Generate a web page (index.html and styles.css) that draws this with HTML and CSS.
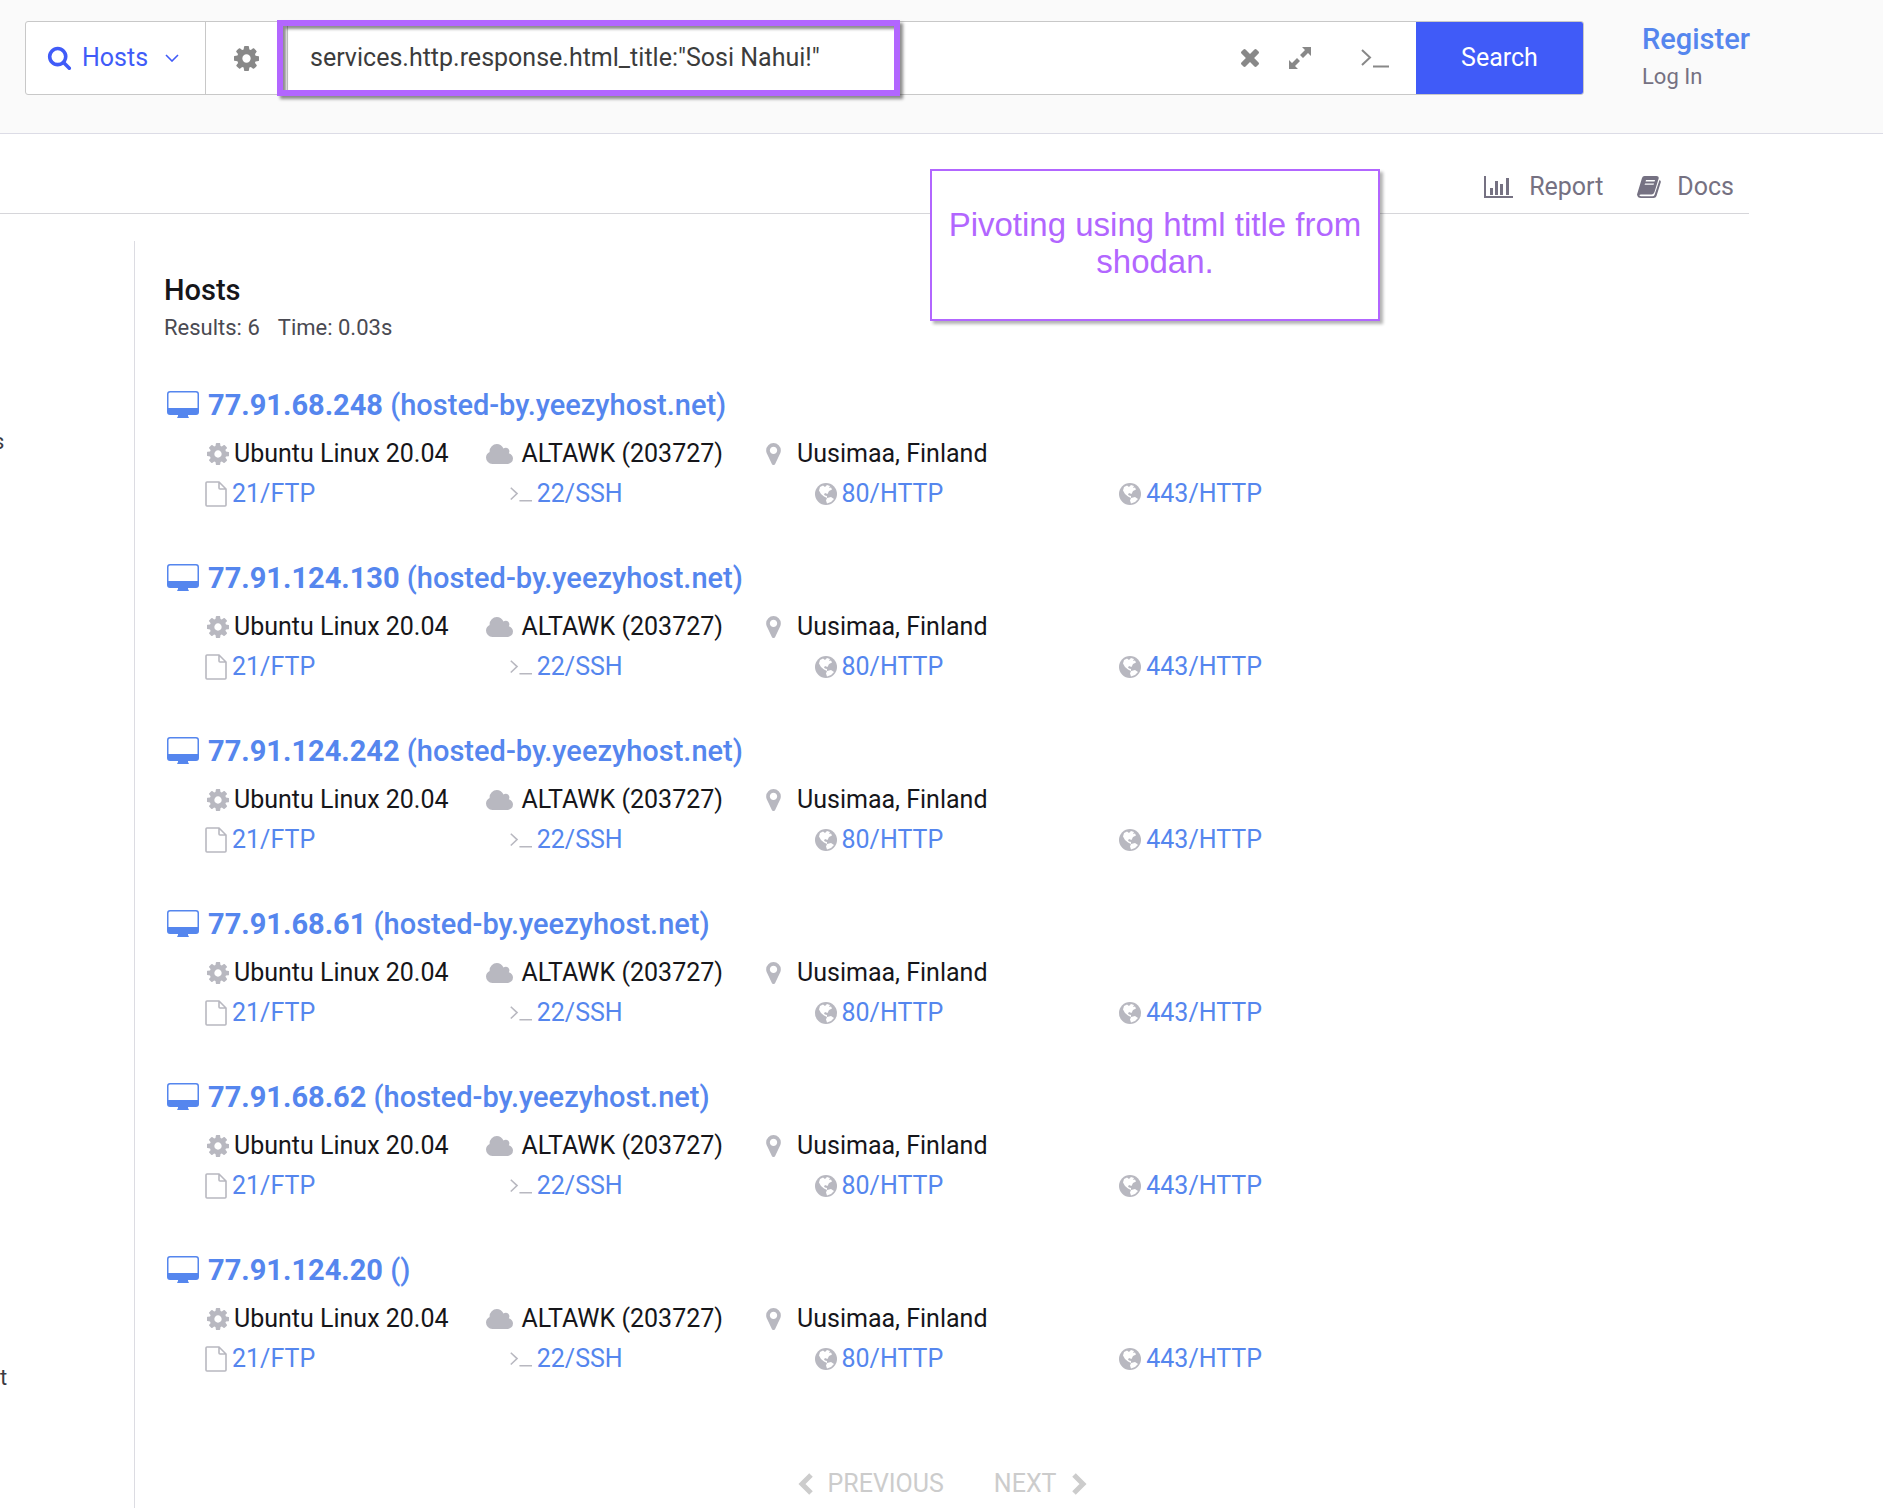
FILE: index.html
```html
<!doctype html>
<html lang="en">
    <head>
        <meta charset="UTF-8" />
        <meta name="viewport" content="width=device-width, initial-scale=1.0" />
        <title>Hosts search</title>
        <link rel="stylesheet" href="styles.css">
    </head>
    <body>
        <!-- Shared icons -->
        <svg class="sprite" aria-hidden="true">
            <symbol id="i-search" viewBox="0 0 1792 1792"><path d="M1216 832q0-185-131.500-316.500t-316.500-131.500-316.500 131.500-131.500 316.500 131.500 316.500 316.500 131.500 316.500-131.500 131.500-316.500zm512 832q0 52-38 90t-90 38q-54 0-90-38l-343-342q-179 124-399 124-143 0-273.500-55.500t-225-150-150-225-55.500-273.500 55.500-273.500 150-225 225-150 273.500-55.500 273.500 55.500 225 150 150 225 55.500 273.500q0 220-124 399l343 343q37 37 37 90z" /></symbol>
            <symbol id="i-cog" viewBox="128 128 1536 1536"><path d="M1152 896q0-106-75-181t-181-75-181 75-75 181 75 181 181 75 181-75 75-181zm512-109v222q0 12-8 23t-20 13l-185 28q-19 54-39 91 35 50 107 138 10 12 10 25t-9 23q-27 37-99 108t-94 71q-12 0-26-9l-138-108q-44 23-91 38-16 136-29 186-7 28-36 28h-222q-14 0-24.500-8.500t-11.500-21.500l-28-184q-49-16-90-37l-141 107q-10 9-25 9-14 0-25-11-126-114-165-168-7-10-7-23 0-12 8-23 15-21 51-66.500t54-70.500q-27-50-41-99l-183-27q-13-2-21-12.500t-8-23.500v-222q0-12 8-23t19-13l186-28q14-46 39-92-40-57-107-138-10-12-10-24 0-10 9-23 26-36 98.500-107.500t94.500-71.500q13 0 26 10l138 107q44-23 91-38 16-136 29-186 7-28 36-28h222q14 0 24.500 8.500t11.500 21.500l28 184q49 16 90 37l142-107q9-9 24-9 13 0 25 10 129 119 165 170 7 8 7 22 0 12-8 23-15 21-51 66.500t-54 70.500q26 50 41 98l183 28q13 2 21 12.500t8 23.500z" /></symbol>
            <symbol id="i-times" viewBox="302 366 1188 1188"><path d="M1490 1322q0 40-28 68l-136 136q-28 28-68 28t-68-28l-294-294-294 294q-28 28-68 28t-68-28l-136-136q-28-28-28-68t28-68l294-294-294-294q-28-28-28-68t28-68l136-136q28-28 68-28t68 28l294 294 294-294q28-28 68-28t68 28l136 136q28 28 28 68t-28 68l-294 294 294 294q28 28 28 68z" /></symbol>
            <symbol id="i-expand" viewBox="0 0 24 24"><path d="M14 1h9v9l-3-3-5 5-3-3 5-5zM10 23H1v-9l3 3 5-5 3 3-5 5z" /></symbol>
            <symbol id="i-terminal" viewBox="0 0 28 20"><path d="M1 2l8 7.500L1 17M12 18.500h16" fill="none" stroke="currentColor" stroke-width="2" /></symbol>
            <symbol id="i-cloud" viewBox="0 128 1920 1408"><path d="M1920 1152q0 159-112.500 271.500t-271.500 112.500h-1088q-185 0-316.500-131.500t-131.500-316.500q0-132 71-241.500t187-163.500q-2-28-2-43 0-212 150-362t362-150q158 0 286.500 88t187.500 230q70-62 166-62 106 0 181 75t75 181q0 75-41 138 129 30 213 134.500t84 239.500z" /></symbol>
            <symbol id="i-marker" viewBox="384 128 1024 1536"><path d="M1152 640q0-106-75-181t-181-75-181 75-75 181 75 181 181 75 181-75 75-181zm256 0q0 109-33 179l-364 774q-16 33-47.500 52t-67.500 19-67.500-19-46.500-52l-365-774q-33-70-33-179 0-212 150-362t362-150 362 150 150 362z" /></symbol>
            <symbol id="i-file" viewBox="0 0 22 26"><path d="M14 1H2q-1 0-1 1v22q0 1 1 1h18q1 0 1-1V8zM14 1v6q0 1 1 1h6" fill="none" stroke="currentColor" stroke-width="1.600" /></symbol>
            <symbol id="i-globe" viewBox="0 0 22 22"><circle cx="11" cy="11" r="11" /><path d="M5 4l3-1.500 2 1.500 2-2 3 1-1 2 2-.5 1 2-3 1.500-1.500 3-2.500-1-1 1.500 1 1 2 .5 0 2-3-1.500-3-2.500L4 7.500zM12 15l4-1 3 2-3 3-4 1.500-1-3z" fill="#fff" /></symbol>
            <symbol id="i-desktop" viewBox="0 0 32 27"><path d="M3 0h26q3 0 3 3v18q0 3-3 3h-8v1l1 2H10l1-2v-1H3q-3 0-3-3V3q0-3 3-3zM3 1.500Q1.500 1.500 1.500 3v14h29V3q0-1.500-1.500-1.500z" fill-rule="evenodd" /></symbol>
            <symbol id="i-chart" viewBox="0 0 29 22"><path d="M0 0h2v20h27v2H0zM6 12h3v7H6zM11 5h3v14h-3zM16 8h3v11h-3zM22 2h3v17h-3z" /></symbol>
            <symbol id="i-book" viewBox="0 0 24 22"><path d="M7.500 0h12q3 0 2 3l-4 13q-1 2.500-3 2.500H4q-2 0-1.500 1t2 .8h11q1.500 0 2-1.300L22.500 4q1.800.6 1.200 2.500L19.500 20q-.7 2-3 2H4q-3.500 0-4-3.500L5 2q.6-2 2.500-2zM9 4l-.4 1.400h9L18 4zM8 7.400l-.4 1.400h9L17 7.400z" fill-rule="evenodd" /></symbol>
            <symbol id="i-down" viewBox="0 0 14 8"><path d="M1 1l6 6 6-6" fill="none" stroke="currentColor" stroke-width="1.600" /></symbol>
            <symbol id="i-left" viewBox="0 0 15 22"><path d="M13 2l-9 9 9 9" fill="none" stroke="currentColor" stroke-width="5" /></symbol>
            <symbol id="i-right" viewBox="0 0 15 22"><path d="M2 2l9 9-9 9" fill="none" stroke="currentColor" stroke-width="5" /></symbol>
        </svg>

        <header class="header">
            <form class="search-bar">
                <label class="resource">
                    <svg class="icon resource-icon" width="25" height="25"><use href="#i-search" /></svg>
                    <select aria-label="Resource">
                        <option>Hosts</option>
                    </select>
                    <svg class="icon resource-arrow" width="14" height="8"><use href="#i-down" /></svg>
                </label>
                <button type="button" class="tool settings" aria-label="Settings">
                    <svg class="icon" width="25" height="25"><use href="#i-cog" /></svg>
                </button>
                <input type="text" class="query" aria-label="Query" value='services.http.response.html_title:"Sosi Nahui!"' />
                <div class="query-tools">
                    <button type="button" class="tool" aria-label="Clear">
                        <svg class="icon" width="18" height="18"><use href="#i-times" /></svg>
                    </button>
                    <button type="button" class="tool" aria-label="Expand">
                        <svg class="icon" width="24" height="24"><use href="#i-expand" /></svg>
                    </button>
                    <button type="button" class="tool console" aria-label="Console">
                        <svg class="icon" width="28" height="20"><use href="#i-terminal" /></svg>
                    </button>
                </div>
                <button type="submit" class="search-btn">Search</button>
                <div class="highlight"></div>
            </form>
            <nav class="account">
                <a href="#" class="register">Register</a>
                <a href="#" class="login">Log In</a>
            </nav>
        </header>

        <div class="toolbar">
            <a href="#"><svg class="icon" width="29" height="22"><use href="#i-chart" /></svg>Report</a>
            <a href="#"><svg class="icon" width="24" height="22"><use href="#i-book" /></svg>Docs</a>
            <div class="note">Pivoting using html title from shodan.</div>
        </div>

        <div class="content">
            <aside class="sidebar">
                <div class="filter cut">s</div>
                <div class="filter">t</div>
            </aside>

            <main class="results">
                <h1>Hosts</h1>
                <p class="summary"><span>Results: 6</span><span>Time: 0.03s</span></p>

                <div class="host">
                    <h2><a href="#"><svg class="icon" width="32" height="27"><use href="#i-desktop" /></svg><span><strong>77.91.68.248</strong> (hosted-by.yeezyhost.net)</span></a></h2>
                    <div class="meta">
                        <span class="os"><svg class="icon" width="22" height="22"><use href="#i-cog" /></svg>Ubuntu Linux 20.04</span>
                        <span class="network"><svg class="icon" width="27" height="20"><use href="#i-cloud" /></svg>ALTAWK (203727)</span>
                        <span class="place"><svg class="icon" width="15" height="22"><use href="#i-marker" /></svg>Uusimaa, Finland</span>
                    </div>
                    <div class="services">
                        <a href="#"><svg class="icon" width="22" height="26"><use href="#i-file" /></svg>21/FTP</a>
                        <a href="#"><svg class="icon" width="22" height="16"><use href="#i-terminal" /></svg>22/SSH</a>
                        <a href="#"><svg class="icon" width="22" height="22"><use href="#i-globe" /></svg>80/HTTP</a>
                        <a href="#"><svg class="icon" width="22" height="22"><use href="#i-globe" /></svg>443/HTTP</a>
                    </div>
                </div>

                <div class="host">
                    <h2><a href="#"><svg class="icon" width="32" height="27"><use href="#i-desktop" /></svg><span><strong>77.91.124.130</strong> (hosted-by.yeezyhost.net)</span></a></h2>
                    <div class="meta">
                        <span class="os"><svg class="icon" width="22" height="22"><use href="#i-cog" /></svg>Ubuntu Linux 20.04</span>
                        <span class="network"><svg class="icon" width="27" height="20"><use href="#i-cloud" /></svg>ALTAWK (203727)</span>
                        <span class="place"><svg class="icon" width="15" height="22"><use href="#i-marker" /></svg>Uusimaa, Finland</span>
                    </div>
                    <div class="services">
                        <a href="#"><svg class="icon" width="22" height="26"><use href="#i-file" /></svg>21/FTP</a>
                        <a href="#"><svg class="icon" width="22" height="16"><use href="#i-terminal" /></svg>22/SSH</a>
                        <a href="#"><svg class="icon" width="22" height="22"><use href="#i-globe" /></svg>80/HTTP</a>
                        <a href="#"><svg class="icon" width="22" height="22"><use href="#i-globe" /></svg>443/HTTP</a>
                    </div>
                </div>

                <div class="host">
                    <h2><a href="#"><svg class="icon" width="32" height="27"><use href="#i-desktop" /></svg><span><strong>77.91.124.242</strong> (hosted-by.yeezyhost.net)</span></a></h2>
                    <div class="meta">
                        <span class="os"><svg class="icon" width="22" height="22"><use href="#i-cog" /></svg>Ubuntu Linux 20.04</span>
                        <span class="network"><svg class="icon" width="27" height="20"><use href="#i-cloud" /></svg>ALTAWK (203727)</span>
                        <span class="place"><svg class="icon" width="15" height="22"><use href="#i-marker" /></svg>Uusimaa, Finland</span>
                    </div>
                    <div class="services">
                        <a href="#"><svg class="icon" width="22" height="26"><use href="#i-file" /></svg>21/FTP</a>
                        <a href="#"><svg class="icon" width="22" height="16"><use href="#i-terminal" /></svg>22/SSH</a>
                        <a href="#"><svg class="icon" width="22" height="22"><use href="#i-globe" /></svg>80/HTTP</a>
                        <a href="#"><svg class="icon" width="22" height="22"><use href="#i-globe" /></svg>443/HTTP</a>
                    </div>
                </div>

                <div class="host">
                    <h2><a href="#"><svg class="icon" width="32" height="27"><use href="#i-desktop" /></svg><span><strong>77.91.68.61</strong> (hosted-by.yeezyhost.net)</span></a></h2>
                    <div class="meta">
                        <span class="os"><svg class="icon" width="22" height="22"><use href="#i-cog" /></svg>Ubuntu Linux 20.04</span>
                        <span class="network"><svg class="icon" width="27" height="20"><use href="#i-cloud" /></svg>ALTAWK (203727)</span>
                        <span class="place"><svg class="icon" width="15" height="22"><use href="#i-marker" /></svg>Uusimaa, Finland</span>
                    </div>
                    <div class="services">
                        <a href="#"><svg class="icon" width="22" height="26"><use href="#i-file" /></svg>21/FTP</a>
                        <a href="#"><svg class="icon" width="22" height="16"><use href="#i-terminal" /></svg>22/SSH</a>
                        <a href="#"><svg class="icon" width="22" height="22"><use href="#i-globe" /></svg>80/HTTP</a>
                        <a href="#"><svg class="icon" width="22" height="22"><use href="#i-globe" /></svg>443/HTTP</a>
                    </div>
                </div>

                <div class="host">
                    <h2><a href="#"><svg class="icon" width="32" height="27"><use href="#i-desktop" /></svg><span><strong>77.91.68.62</strong> (hosted-by.yeezyhost.net)</span></a></h2>
                    <div class="meta">
                        <span class="os"><svg class="icon" width="22" height="22"><use href="#i-cog" /></svg>Ubuntu Linux 20.04</span>
                        <span class="network"><svg class="icon" width="27" height="20"><use href="#i-cloud" /></svg>ALTAWK (203727)</span>
                        <span class="place"><svg class="icon" width="15" height="22"><use href="#i-marker" /></svg>Uusimaa, Finland</span>
                    </div>
                    <div class="services">
                        <a href="#"><svg class="icon" width="22" height="26"><use href="#i-file" /></svg>21/FTP</a>
                        <a href="#"><svg class="icon" width="22" height="16"><use href="#i-terminal" /></svg>22/SSH</a>
                        <a href="#"><svg class="icon" width="22" height="22"><use href="#i-globe" /></svg>80/HTTP</a>
                        <a href="#"><svg class="icon" width="22" height="22"><use href="#i-globe" /></svg>443/HTTP</a>
                    </div>
                </div>

                <div class="host">
                    <h2><a href="#"><svg class="icon" width="32" height="27"><use href="#i-desktop" /></svg><span><strong>77.91.124.20</strong> ()</span></a></h2>
                    <div class="meta">
                        <span class="os"><svg class="icon" width="22" height="22"><use href="#i-cog" /></svg>Ubuntu Linux 20.04</span>
                        <span class="network"><svg class="icon" width="27" height="20"><use href="#i-cloud" /></svg>ALTAWK (203727)</span>
                        <span class="place"><svg class="icon" width="15" height="22"><use href="#i-marker" /></svg>Uusimaa, Finland</span>
                    </div>
                    <div class="services">
                        <a href="#"><svg class="icon" width="22" height="26"><use href="#i-file" /></svg>21/FTP</a>
                        <a href="#"><svg class="icon" width="22" height="16"><use href="#i-terminal" /></svg>22/SSH</a>
                        <a href="#"><svg class="icon" width="22" height="22"><use href="#i-globe" /></svg>80/HTTP</a>
                        <a href="#"><svg class="icon" width="22" height="22"><use href="#i-globe" /></svg>443/HTTP</a>
                    </div>
                </div>

                <div class="pager">
                    <button type="button" disabled><svg class="icon" width="15" height="22"><use href="#i-left" /></svg>PREVIOUS</button>
                    <button type="button" disabled>NEXT<svg class="icon" width="15" height="22"><use href="#i-right" /></svg></button>
                </div>
            </main>
        </div>
    </body>
</html>
```

FILE: styles.css
```css
* {
    box-sizing: border-box;
}

body {
    margin: 0;
    min-height: 100vh;
    display: flex;
    flex-direction: column;
    background: #fff;
    color: #16161a;
    font-family: Roboto, sans-serif;
    font-size: 25px;
    line-height: 40px;
}

a {
    color: #5586ee;
    text-decoration: none;
}

button,
input,
select {
    border: none;
    background: none;
    font: inherit;
    color: inherit;
    padding: 0;
}

button {
    cursor: pointer;
}

.sprite {
    display: none;
}

.icon {
    fill: currentColor;
    flex: none;
}

/* Header */
.header {
    display: flex;
    gap: 58px;
    height: 134px;
    padding: 21px 0 0 25px;
    background: #fafafa;
    border-bottom: 1px solid #dcdce6;
}

.search-bar {
    position: relative;
    flex: 1;
    display: flex;
    height: 74px;
    background: #fff;
    border: 1px solid #c8c8c8;
    border-radius: 3px;
}

.resource {
    position: relative;
    display: flex;
    color: #405bf8;
    border-right: 1px solid #c8c8c8;
}

.resource select {
    width: 179px;
    padding-left: 56px;
    appearance: none;
    outline: none;
}

.resource-icon {
    position: absolute;
    left: 21px;
    top: 23px;
}

.resource-arrow {
    position: absolute;
    right: 26px;
    top: 32px;
    pointer-events: none;
}

.tool {
    display: flex;
    align-items: center;
    color: #888;
}

.settings {
    width: 81px;
    padding-left: 28px;
}

.query {
    flex: 1;
    min-width: 0;
    padding-left: 22px;
    color: #3c3c3c;
    border-left: 1px solid #c8c8c8;
    outline: none;
}

.query-tools {
    display: flex;
    gap: 29px;
    padding-right: 27px;
}

.console {
    margin-left: 20px;
}

.search-btn {
    width: 167px;
    background: #405bf8;
    color: #fff;
    border-radius: 0 2px 2px 0;
}

.highlight {
    position: absolute;
    left: 251px;
    top: -2px;
    width: 623px;
    height: 76px;
    border: 6px solid #b266ff;
    box-shadow: 3px 3px 3px rgba(0, 0, 0, 0.45), inset 3px 3px 3px rgba(0, 0, 0, 0.45);
    pointer-events: none;
}

.account {
    width: 241px;
    display: flex;
    flex-direction: column;
}

.register {
    font-size: 29px;
    font-weight: 500;
    line-height: 36px;
}

.login {
    font-size: 22px;
    color: #757182;
}

/* Toolbar */
.toolbar {
    position: relative;
    display: flex;
    justify-content: flex-end;
    gap: 34px;
    height: 80px;
    margin-right: 134px;
    padding: 33px 15px 0 0;
    border-bottom: 1px solid #d6d6da;
}

.toolbar a {
    display: flex;
    align-items: center;
    height: 40px;
    gap: 16px;
    color: #757182;
}

.note {
    position: absolute;
    left: 930px;
    top: 35px;
    width: 450px;
    height: 152px;
    display: flex;
    align-items: center;
    padding: 0 10px 4px;
    background: #fff;
    border: 2px solid #b266ff;
    box-shadow: 3px 3px 3px rgba(0, 0, 0, 0.3);
    color: #b266ff;
    font-family: "Liberation Sans", Arial, sans-serif;
    font-size: 33px;
    line-height: 37px;
    text-align: center;
}

/* Content */
.content {
    flex: 1;
    display: flex;
    margin-right: 134px;
    padding-top: 27px;
}

.sidebar {
    width: 134px;
    flex: none;
    display: flex;
    flex-direction: column;
    gap: 896px;
    padding-top: 181px;
    font-size: 22px;
    color: #3c3c44;
}

.cut {
    margin-left: -7px;
}

.results {
    flex: 1;
    padding: 29px 29px 0;
    border-left: 1px solid #dcdce2;
}

.results h1 {
    margin: 0;
    font-size: 29px;
    font-weight: 500;
}

.summary {
    display: flex;
    gap: 18px;
    margin: 0 0 35px;
    font-size: 22px;
    line-height: 36px;
    color: #4a4a52;
}

.host {
    margin-bottom: 41px;
}

.host h2 {
    margin: 0 0 4px;
    padding-left: 3px;
    font-size: 29px;
    font-weight: 500;
    line-height: 48px;
}

.host h2 a {
    display: flex;
    align-items: center;
    gap: 9px;
}

.host h2 .icon {
    margin-bottom: 2px;
}

.host h2 strong {
    font-weight: 700;
}

.meta {
    display: flex;
    gap: 37px;
    padding-left: 43px;
    line-height: 42px;
}

.meta span {
    display: flex;
    align-items: center;
}

.meta .icon,
.services .icon {
    color: #b8b8c0;
}

.os {
    gap: 5px;
}

.network {
    gap: 9px;
}

.place {
    gap: 16px;
    padding-left: 6px;
}

.services {
    display: grid;
    grid-template-columns: repeat(4, 1fr);
    max-width: 1260px;
    padding-left: 41px;
    line-height: 38px;
}

.services a {
    display: flex;
    align-items: center;
    gap: 5px;
}

.pager {
    display: flex;
    justify-content: center;
    gap: 50px;
    padding-top: 45px;
}

.pager button {
    display: flex;
    align-items: center;
    gap: 15px;
    color: #ccc;
    cursor: default;
}
```
